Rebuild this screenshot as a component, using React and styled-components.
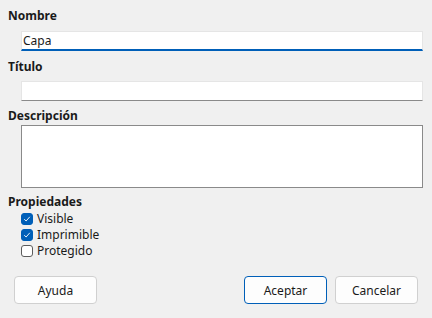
import React, { useState } from "react";
import styled, { createGlobalStyle } from "styled-components";

const GlobalStyle = createGlobalStyle`
  html, body {
    margin: 0;
    padding: 0;
    background: #f0f0f0;
  }
  body {
    font-family: "Noto Sans", "Open Sans", sans-serif;
    font-size: 12px;
    color: #1a1a1a;
  }
`;

const Dialog = styled.div`
  width: 432px;
  height: 318px;
  box-sizing: border-box;
  padding: 8px 9px 0 8px;
  display: flex;
  flex-direction: column;
  overflow: hidden;
`;

const Label = styled.div`
  font-weight: 700;
  line-height: 16px;
  height: 16px;
  margin-top: ${({ $top }) => $top || 0}px;
  margin-bottom: ${({ $bottom }) => $bottom || 0}px;
`;

const Field = styled.input`
  margin-left: 13px;
  width: 402px;
  height: 20px;
  box-sizing: border-box;
  border: 1px solid #e5e5e5;
  border-bottom: ${({ $focused }) =>
    $focused ? "2px solid #005fb8" : "1px solid #8a8a8a"};
  background: #fff;
  padding: 0 0 0 1px;
  font: inherit;
  font-size: 12px;
  color: #1a1a1a;
  outline: none;
`;

const Area = styled.textarea`
  margin-left: 13px;
  width: 402px;
  height: 63px;
  box-sizing: border-box;
  border: 1px solid #8a8a8a;
  background: #fff;
  resize: none;
  font: inherit;
  outline: none;
`;

const Checks = styled.div`
  display: flex;
  flex-direction: column;
  margin-left: 13px;
  margin-top: 1px;
`;

const CheckRow = styled.label`
  display: flex;
  align-items: center;
  gap: 4px;
  height: 16px;
  line-height: 16px;
`;

const Box = styled.span`
  width: 12px;
  height: 12px;
  box-sizing: border-box;
  border-radius: 3px;
  display: flex;
  align-items: center;
  justify-content: center;
  background: ${({ $on }) => ($on ? "#005fb8" : "#fff")};
  border: 1px solid ${({ $on }) => ($on ? "#005fb8" : "#5c5c5c")};
`;

const Buttons = styled.div`
  display: flex;
  margin-top: 17px;
  padding-left: 6px;
`;

const Button = styled.button`
  width: 83px;
  height: 28px;
  box-sizing: border-box;
  border-radius: 4px;
  background: #fdfdfd;
  border: 1px solid ${({ $primary }) => ($primary ? "#005fb8" : "#d0d0d0")};
  font: inherit;
  font-size: 12px;
  color: #1a1a1a;
  padding: 0;
  margin-left: ${({ $left }) => $left || 0}px;
`;

function Check({ label, on }) {
  return (
    <CheckRow>
      <Box $on={on}>
        {on && (
          <svg width="8" height="8" viewBox="0 0 8 8">
            <path
              d="M1.2 4.2 L3.1 6 L6.8 1.8"
              fill="none"
              stroke="#fff"
              strokeWidth="0.9"
            />
          </svg>
        )}
      </Box>
      {label}
    </CheckRow>
  );
}

export default function App() {
  const [name, setName] = useState("Capa");

  return (
    <>
      <GlobalStyle />
      <Dialog>
        <Label $bottom={7}>Nombre</Label>
        <Field $focused value={name} onChange={(e) => setName(e.target.value)} />
        <Label $top={8} $bottom={6}>Título</Label>
        <Field />
        <Label $top={7} $bottom={1}>Descripción</Label>
        <Area />
        <Label $top={6}>Propiedades</Label>
        <Checks>
          <Check label="Visible" on />
          <Check label="Imprimible" on />
          <Check label="Protegido" />
        </Checks>
        <Buttons>
          <Button>Ayuda</Button>
          <Button $primary $left={147}>Aceptar</Button>
          <Button $left={8}>Cancelar</Button>
        </Buttons>
      </Dialog>
    </>
  );
}
